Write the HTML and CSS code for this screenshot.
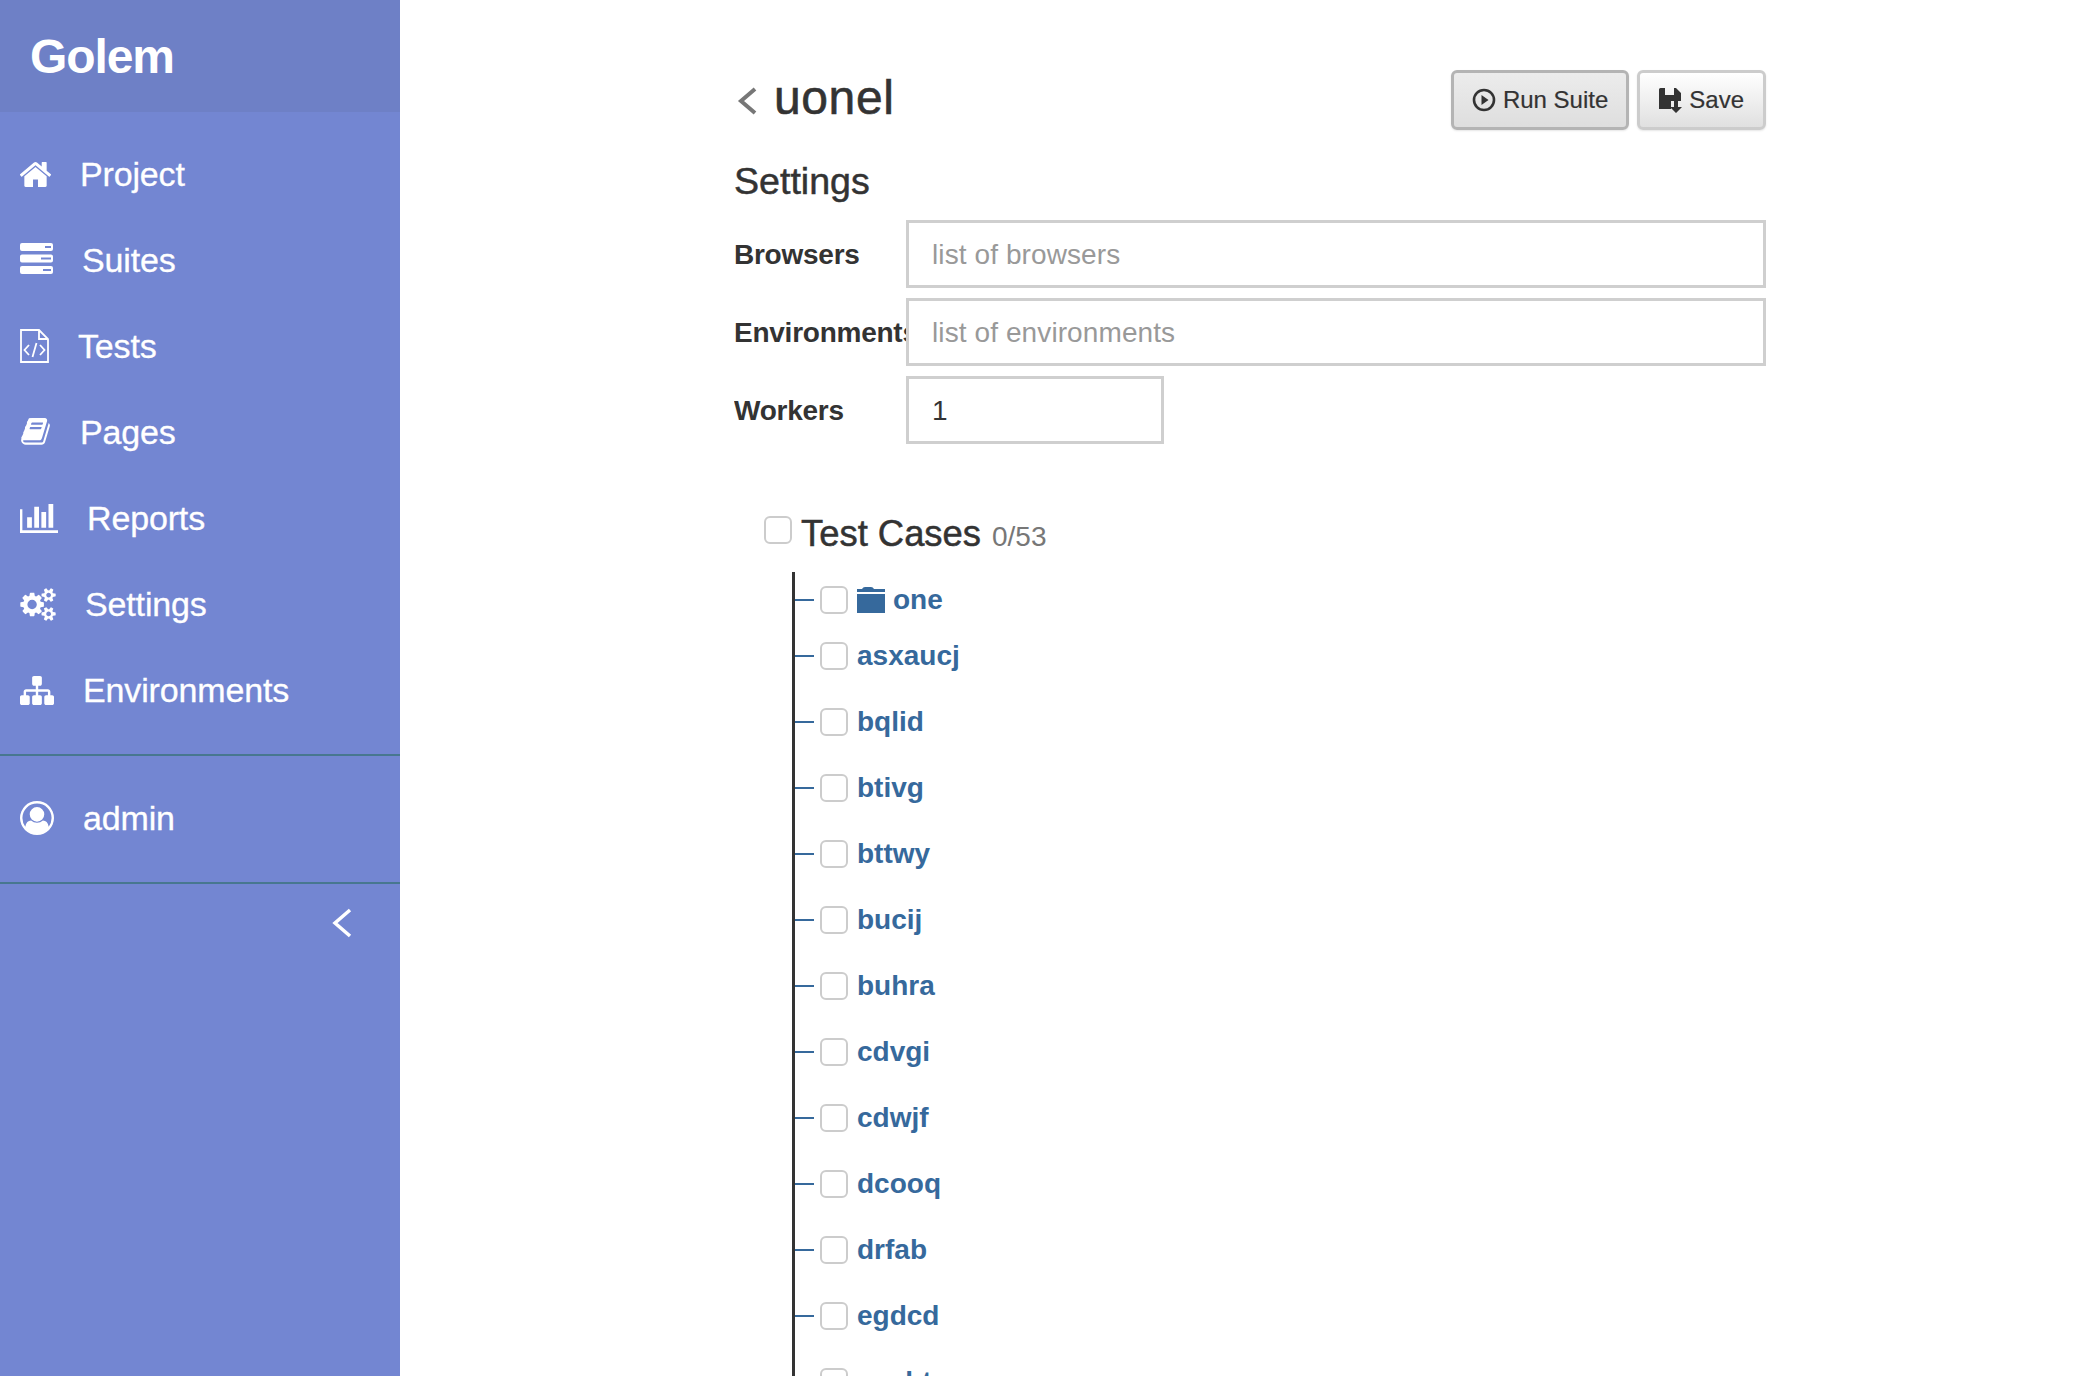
FILE: index.html
```html
<!DOCTYPE html>
<html lang="en">
<head>
    <meta charset="UTF-8">
    <title>Golem - uonel</title>
    <link rel="stylesheet" href="styles.css">
</head>
<body>
    <!-- Sidebar -->
    <aside class="sidebar">
        <div class="brand">Golem</div>
        <nav class="nav">
            <a class="nav-item"><svg class="icon" width="31" height="25" viewBox="96 256 1600 1280"><path d="M1472 992v480q0 26-19 45t-45 19h-384v-384h-256v384h-384q-26 0-45-19t-19-45v-480q0-1 .5-3t.5-3l575-474 575 474q1 2 1 6zm223-69l-62 74q-8 9-21 11h-3q-13 0-21-7l-692-577-692 577q-12 8-24 7-13-2-21-11l-62-74q-8-10-7-23.5t11-21.5l719-599q32-26 76-26t76 26l244 204v-195q0-14 9-23t23-9h192q14 0 23 9t9 23v408l219 182q10 8 11 21.5t-7 23.5z"/></svg>Project</a>
            <a class="nav-item"><svg class="icon icon-server" width="33" height="31" viewBox="0 0 33 31"><path fill-rule="evenodd" d="M2 0h29a2 2 0 0 1 2 2v4a2 2 0 0 1-2 2H2a2 2 0 0 1-2-2V2a2 2 0 0 1 2-2zm23 3v2h6V3zM2 11.500h29a2 2 0 0 1 2 2v4a2 2 0 0 1-2 2H2a2 2 0 0 1-2-2v-4a2 2 0 0 1 2-2zm19 3v2h10v-2zM2 23h29a2 2 0 0 1 2 2v4a2 2 0 0 1-2 2H2a2 2 0 0 1-2-2v-4a2 2 0 0 1 2-2zm21 3v2h8v-2z"/></svg>Suites</a>
            <a class="nav-item"><svg class="icon icon-line" width="29" height="34" viewBox="0 0 29 34"><path stroke-width="1.800" d="M1 1h18l9 9v23H1zM19 1v9h9M9 16l-4.500 5 4.500 5M20 16l4.500 5-4.500 5M16.500 14l-4 14"/></svg>Tests</a>
            <a class="nav-item"><svg class="icon" width="31" height="29" viewBox="0 128 1792 1664" preserveAspectRatio="none"><path d="M1703 478q40 57 18 129l-275 906q-19 64-76.500 107.500t-122.500 43.500h-923q-77 0-148.500-53.500t-99.500-131.500q-24-67-2-127 0-4 3-27t4-37q1-8-3-21.500t-3-19.500q2-11 8-21t16.500-23.500 16.500-23.500q23-38 45-91.500t30-91.500q3-10 .5-30t-.5-28q3-11 17-28t17-23q21-36 42-92t25-90q1-9-2.500-32t.5-28q4-13 22-30.500t22-22.500q19-26 42.500-84.500t27.500-96.500q1-8-3-25.500t-2-26.500q2-8 9-18t18-23 17-21q8-12 16.500-30.500t15-35 16-36 19.500-32 26.500-23.500 36-11.500 47.500 5.500l-1 3q38-9 51-9h761q74 0 114 56t18 130l-274 906q-36 119-71.500 153.500t-128.500 34.500h-869q-27 0-38 15-11 16-1 43 24 70 144 70h923q29 0 56-15.500t35-41.500l300-987q7-22 5-57 38 15 59 43zm-1064 2q-4 13 2 22.500t20 9.500h608q13 0 25.500-9.500t16.500-22.500l21-64q4-13-2-22.500t-20-9.500h-608q-13 0-25.500 9.500t-16.500 22.500zm-83 256q-4 13 2 22.500t20 9.500h608q13 0 25.500-9.500t16.500-22.500l21-64q4-13-2-22.500t-20-9.500h-608q-13 0-25.500 9.500t-16.500 22.500z"/></svg>Pages</a>
            <a class="nav-item"><svg class="icon" width="38" height="29" viewBox="0 256 2048 1408" preserveAspectRatio="none"><path d="M640 896v512h-256v-512h256zm384-512v1024h-256v-1024h256zm1024 1152v128h-2048v-1152h128v1024h1920zm-640-896v768h-256v-768h256zm384-384v1152h-256v-1152h256z"/></svg>Reports</a>
            <a class="nav-item"><svg class="icon" width="36" height="33" viewBox="0 0 1920 1792"><path d="M896 896q0-106-75-181t-181-75-181 75-75 181 75 181 181 75 181-75 75-181zm768 512q0-52-38-90t-90-38-90 38-38 90q0 53 37.500 90.500t90.500 37.500 90.500-37.500 37.500-90.500zm0-1024q0-52-38-90t-90-38-90 38-38 90q0 53 37.500 90.500t90.500 37.500 90.500-37.500 37.500-90.500zm-384 421v185q0 10-7 19.500t-16 10.500l-155 24q-11 35-32 76 34 48 90 115 7 11 7 20 0 12-7 19-23 30-82.500 89.500t-78.500 59.500q-11 0-21-7l-115-90q-37 19-77 31-11 108-23 155-7 24-30 24h-186q-11 0-20-7.500t-10-17.500l-23-153q-34-10-75-31l-118 89q-7 7-20 7-11 0-21-8-144-133-144-160 0-9 7-19 10-14 41-53t47-61q-23-44-35-82l-152-24q-10-1-17-9.500t-7-19.500v-185q0-10 7-19.500t16-10.500l155-24q11-35 32-76-34-48-90-115-7-11-7-20 0-12 7-20 22-30 82-89t79-59q11 0 21 7l115 90q34-18 77-32 11-108 23-154 7-24 30-24h186q11 0 20 7.500t10 17.500l23 153q34 10 75 31l118-89q8-7 20-7 11 0 21 8 144 133 144 160 0 8-7 19-12 16-42 54t-45 60q23 48 34 82l152 23q10 2 17 10.500t7 19.500zm640 533v140q0 16-149 31-12 27-30 52 51 113 51 138 0 4-4 7-122 71-124 71-8 0-46-47t-52-68q-20 2-30 2t-30-2q-14 21-52 68t-46 47q-2 0-124-71-4-3-4-7 0-25 51-138-18-25-30-52-149-15-149-31v-140q0-16 149-31 13-29 30-52-51-113-51-138 0-4 4-7 4-2 35-20t59-34 30-16q8 0 46 46.500t52 67.500q20-2 30-2t30 2q51-71 92-112l6-2q4 0 124 70 4 3 4 7 0 25-51 138 17 23 30 52 149 15 149 31zm0-1024v140q0 16-149 31-12 27-30 52 51 113 51 138 0 4-4 7-122 71-124 71-8 0-46-47t-52-68q-20 2-30 2t-30-2q-14 21-52 68t-46 47q-2 0-124-71-4-3-4-7 0-25 51-138-18-25-30-52-149-15-149-31v-140q0-16 149-31 13-29 30-52-51-113-51-138 0-4 4-7 4-2 35-20t59-34 30-16q8 0 46 46.500t52 67.500q20-2 30-2t30 2q51-71 92-112l6-2q4 0 124 70 4 3 4 7 0 25-51 138 17 23 30 52 149 15 149 31z"/></svg>Settings</a>
            <a class="nav-item"><svg class="icon" width="34" height="29" viewBox="0 128 1792 1536" preserveAspectRatio="none"><path d="M1792 1248v320q0 40-28 68t-68 28h-320q-40 0-68-28t-28-68v-320q0-40 28-68t68-28h96v-192h-512v192h96q40 0 68 28t28 68v320q0 40-28 68t-68 28h-320q-40 0-68-28t-28-68v-320q0-40 28-68t68-28h96v-192h-512v192h96q40 0 68 28t28 68v320q0 40-28 68t-68 28h-320q-40 0-68-28t-28-68v-320q0-40 28-68t68-28h96v-192q0-52 38-90t90-38h512v-192h-96q-40 0-68-28t-28-68v-320q0-40 28-68t68-28h320q40 0 68 28t28 68v320q0 40-28 68t-68 28h-96v192h512q52 0 90 38t38 90v192h96q40 0 68 28t28 68z"/></svg>Environments</a>
        </nav>
        <div class="user">
            <a class="nav-item"><svg class="icon" width="34" height="34" viewBox="0 0 1792 1792"><path d="M896 0q182 0 348 71t286 191 191 286 71 348q0 181-70.500 347t-190.500 286-286 191.500-349 71.500-349-71-285.500-191.500-190.500-286-71-347.500 71-348 191-286 286-191 348-71zm619 1351q149-205 149-455 0-156-61-298t-164-245-245-164-298-61-298 61-245 164-164 245-61 298q0 250 149 455 66-327 306-327 131 128 313 128t313-128q240 0 306 327zm-235-647q0-159-112.500-271.500t-271.500-112.500-271.500 112.500-112.500 271.500 112.500 271.500 271.500 112.500 271.500-112.500 112.500-271.500z"/></svg>admin</a>
        </div>
        <div class="collapse">
            <svg class="icon-line" width="20" height="30" viewBox="0 0 20 30"><path stroke-width="3.500" d="M18 2 3 15l15 13"/></svg>
        </div>
    </aside>

    <main class="content">
        <!-- Title and buttons -->
        <div class="title-row">
            <svg class="back" width="22" height="30" viewBox="0 0 22 30"><path stroke-width="4" d="M19 3 5 15l14 12"/></svg>
            <h1>uonel</h1>
            <div class="actions">
                <button class="btn btn-active"><svg width="24" height="24" viewBox="0 0 24 24"><circle cx="12" cy="12" r="10" fill="none" stroke="#333" stroke-width="2.600"/><path fill="#333" d="M9.500 7 16.500 12 9.500 17z"/></svg>Run Suite</button>
                <button class="btn btn-save"><svg width="23" height="25" viewBox="0 0 23 25"><path fill="#333" d="M0 1.500Q0 0 1.500 0H6v7h9V0h2l5 5v8H12v8H0z"/><path fill="#333" d="M15 13h4v6h4l-6 6-6-6h4z"/></svg>Save</button>
            </div>
        </div>

        <h2>Settings</h2>
        <div class="field">
            <label>Browsers</label>
            <input type="text" class="input" placeholder="list of browsers">
        </div>
        <div class="field">
            <label>Environments</label>
            <input type="text" class="input" placeholder="list of environments">
        </div>
        <div class="field">
            <label>Workers</label>
            <input type="text" class="input input-small" value="1">
        </div>

        <!-- Test tree -->
        <div class="tree-head">
            <span class="check"></span>
            <h3>Test Cases</h3>
            <span class="count">0/53</span>
        </div>
        <ul class="tree">
            <li class="tree-item tree-folder"><span class="check"></span><svg class="folder" width="28" height="26" viewBox="0 0 28 26"><path fill="#36699c" d="M5 2q1-2 3-2h6q2 0 3 2h11v3H0V2zM0 7h28v19H0z"/></svg><a>one</a></li>
            <li class="tree-item"><span class="check"></span><a>asxaucj</a></li>
            <li class="tree-item"><span class="check"></span><a>bqlid</a></li>
            <li class="tree-item"><span class="check"></span><a>btivg</a></li>
            <li class="tree-item"><span class="check"></span><a>bttwy</a></li>
            <li class="tree-item"><span class="check"></span><a>bucij</a></li>
            <li class="tree-item"><span class="check"></span><a>buhra</a></li>
            <li class="tree-item"><span class="check"></span><a>cdvgi</a></li>
            <li class="tree-item"><span class="check"></span><a>cdwjf</a></li>
            <li class="tree-item"><span class="check"></span><a>dcooq</a></li>
            <li class="tree-item"><span class="check"></span><a>drfab</a></li>
            <li class="tree-item"><span class="check"></span><a>egdcd</a></li>
            <li class="tree-item"><span class="check"></span><a>eoxbt</a></li>
        </ul>
    </main>
</body>
</html>
```

FILE: styles.css
```css
/* Basic Styling */
html, body {
    height: 100%;
}

body {
    margin: 0;
    display: flex;
    overflow: hidden;
    font-family: 'Liberation Sans', Arial, sans-serif;
    font-size: 28px;
    color: #333;
    background-color: #fff;
}

/* Sidebar */
.sidebar {
    flex: 0 0 400px;
    background-color: #7386d2;
    color: #fff;
}

.brand {
    height: 112px;
    padding: 0 0 0 30px;
    box-sizing: border-box;
    background-color: #6e80c6;
    font-size: 48px;
    font-weight: bold;
    letter-spacing: -1.1px;
    line-height: 113px;
}

.nav {
    padding: 19px 0 21px;
    border-bottom: 2px solid #47778f;
}

.nav-item {
    height: 86px;
    padding-left: 20px;
    display: flex;
    align-items: center;
    gap: 29px;
    font-size: 34px;
    letter-spacing: -0.15px;
    -webkit-text-stroke: 0.3px #fff;
}

.icon {
    fill: #fff;
    flex: none;
}

.icon-server {
    margin-top: -4px;
}

.icon-line {
    fill: none;
    stroke: #fff;
}

.user {
    padding: 19px 0 21px;
    border-bottom: 2px solid #47778f;
}

.collapse {
    padding: 24px 48px 0 0;
    display: flex;
    justify-content: flex-end;
}

/* Main content */
.content {
    flex: 1;
    padding: 70px 334px 0 334px;
    min-width: 0;
}

.title-row {
    display: flex;
    align-items: center;
    height: 60px;
}

.back {
    fill: none;
    stroke: #777;
    margin: 1px 16px 0 2px;
}

h1 {
    margin: -5px 0 0;
    font-size: 48px;
    font-weight: normal;
    letter-spacing: 0.6px;
    -webkit-text-stroke: 0.6px #333;
}

.actions {
    margin-left: auto;
    display: flex;
    gap: 8px;
}

.btn {
    height: 60px;
    padding: 0 18px;
    display: flex;
    align-items: center;
    gap: 7px;
    font-family: inherit;
    font-size: 24px;
    color: #333;
    border: 3px solid #ccc;
    border-radius: 6px;
    background: linear-gradient(to bottom, #fff, #e0e0e0);
    box-shadow: 0 1px 2px rgba(0, 0, 0, 0.1);
    -webkit-text-stroke: 0.2px #333;
}

.btn-active {
    border-color: #b4b4b4;
    background: linear-gradient(to bottom, #ececec, #dedede);
}

.btn-save {
    padding: 0 19px;
}

h2 {
    margin: 24px 0 12px;
    font-size: 37.6px;
    font-weight: normal;
    line-height: 54px;
    -webkit-text-stroke: 0.5px #333;
}

.field {
    display: flex;
    align-items: center;
    margin-bottom: 10px;
}

.field label {
    flex: 0 0 172px;
    padding-top: 1px;
    overflow: hidden;
    white-space: nowrap;
    font-weight: bold;
    letter-spacing: -0.25px;
}

.input {
    flex: 1;
    min-width: 0;
    height: 68px;
    box-sizing: border-box;
    padding: 1px 23px 0;
    font-family: inherit;
    font-size: 28px;
    letter-spacing: 0.1px;
    color: #333;
    border: 3px solid #cfcfcf;
    border-radius: 0;
    outline: none;
}

.input::placeholder {
    color: #999;
}

.input-small {
    flex: 0 0 258px;
}

/* Test tree */
.check {
    flex: none;
    width: 28px;
    height: 28px;
    box-sizing: border-box;
    border: 2px solid #ccc;
    border-radius: 6px;
    background-color: #fff;
}

.tree-head {
    display: flex;
    align-items: center;
    margin: 65px 0 0 30px;
    height: 50px;
}

.tree-head .check {
    margin: -8px 9px 0 0;
}

h3 {
    margin: 0;
    font-size: 36.4px;
    font-weight: normal;
    -webkit-text-stroke: 0.5px #333;
}

.count {
    margin: 6px 0 0 11px;
    color: #777;
}

.tree {
    list-style: none;
    margin: 13px 0 0 58px;
    padding: 0;
    border-left: 3px solid #333;
}

.tree-item {
    position: relative;
    height: 66px;
    padding-left: 25px;
    display: flex;
    align-items: center;
    gap: 9px;
    font-weight: bold;
    color: #36699c;
}

.tree-item::before {
    content: "";
    position: absolute;
    left: 0;
    top: 32px;
    width: 19px;
    height: 2px;
    background-color: #36699c;
}

.tree-folder {
    height: 46px;
    padding-top: 5px;
    gap: 8px;
}

.tree-folder::before {
    top: 27px;
}

.folder {
    flex: none;
    margin-left: 1px;
}
```
